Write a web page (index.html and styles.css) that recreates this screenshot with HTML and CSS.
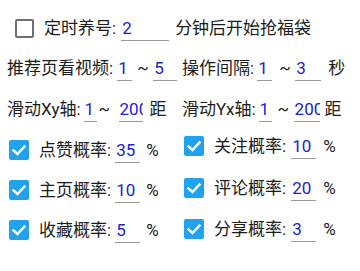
FILE: index.html
```html
<!DOCTYPE html>
<html>
<head>
<meta charset="utf-8">
<link rel="stylesheet" href="styles.css">
</head>
<body>
<div class="page">
  <div class="row r1">
    <span class="cb empty"></span>
    <span class="lbl l-first">定时养号:</span>
    <span class="inp w48 ml5">2</span>
    <span class="txt ml6">分钟后开始抢福袋</span>
  </div>

  <div class="pair r2">
    <div class="row">
      <span class="lbl">推荐页看视频:</span>
      <span class="inp w15 ml4">1</span>
      <span class="tilde t-a">~</span>
      <span class="inp w24">5</span>
    </div>
    <div class="row">
      <span class="lbl">操作间隔:</span>
      <span class="inp w15 ml3">1</span>
      <span class="tilde t-b">~</span>
      <span class="inp w26">3</span>
      <span class="txt ml7">秒</span>
    </div>
  </div>

  <div class="pair r3">
    <div class="row">
      <span class="lbl">滑动Xy轴:</span>
      <span class="inp w13 ml3">1</span>
      <span class="tilde t-c">~</span>
      <span class="inp w24 clip">200</span>
      <span class="txt ml7">距</span>
    </div>
    <div class="row">
      <span class="lbl">滑动Yx轴:</span>
      <span class="inp w13 ml3">1</span>
      <span class="tilde t-d">~</span>
      <span class="inp w26 clip">200</span>
      <span class="txt ml5">距</span>
    </div>
  </div>

  <div class="checks">
    <div class="col col-left">
      <div class="row">
        <span class="cb on"><svg viewBox="0 0 20 20"><polyline points="4.5,10.5 8.5,14 15.5,6.5"/></svg></span>
        <span class="lbl ml10">点赞概率:</span>
        <span class="inp w25 ml4">35</span>
        <span class="txt ml6">%</span>
      </div>
      <div class="row">
        <span class="cb on"><svg viewBox="0 0 20 20"><polyline points="4.5,10.5 8.5,14 15.5,6.5"/></svg></span>
        <span class="lbl ml10">主页概率:</span>
        <span class="inp w25 ml4">10</span>
        <span class="txt ml6">%</span>
      </div>
      <div class="row">
        <span class="cb on"><svg viewBox="0 0 20 20"><polyline points="4.5,10.5 8.5,14 15.5,6.5"/></svg></span>
        <span class="lbl ml10">收藏概率:</span>
        <span class="inp w25 ml4">5</span>
        <span class="txt ml6">%</span>
      </div>
    </div>
    <div class="col col-right">
      <div class="row">
        <span class="cb on"><svg viewBox="0 0 20 20"><polyline points="4.5,10.5 8.5,14 15.5,6.5"/></svg></span>
        <span class="lbl ml10">关注概率:</span>
        <span class="inp w25 ml5">10</span>
        <span class="txt ml7">%</span>
      </div>
      <div class="row">
        <span class="cb on"><svg viewBox="0 0 20 20"><polyline points="4.5,10.5 8.5,14 15.5,6.5"/></svg></span>
        <span class="lbl ml10">评论概率:</span>
        <span class="inp w25 ml5">20</span>
        <span class="txt ml7">%</span>
      </div>
      <div class="row">
        <span class="cb on"><svg viewBox="0 0 20 20"><polyline points="4.5,10.5 8.5,14 15.5,6.5"/></svg></span>
        <span class="lbl ml10">分享概率:</span>
        <span class="inp w25 ml5">3</span>
        <span class="txt ml7">%</span>
      </div>
    </div>
  </div>
</div>
</body>
</html>
```

FILE: styles.css
```css
html, body {
  margin: 0;
  padding: 0;
  background: #ffffff;
}
body {
  width: 360px;
  height: 271px;
  overflow: hidden;
  font-family: Roboto, "Noto Sans CJK SC", sans-serif;
  font-size: 17px;
  color: #1c1c1c;
}
.page {
  padding: 14px 0 0 7px;
  display: flex;
  flex-direction: column;
}
.row {
  display: flex;
  align-items: flex-start;
  height: 28px;
  white-space: nowrap;
}
.lbl, .txt, .tilde {
  line-height: 28px;
  height: 28px;
}
.inp {
  box-sizing: border-box;
  height: 27px;
  line-height: 28px;
  padding-left: 1px;
  color: #2020d4;
  border-bottom: 1.5px solid #9a9a9a;
  overflow: hidden;
}
.clip { overflow: hidden; }
.tilde {
  display: inline-block;
  width: 10px;
  text-align: center;
}
.t-a { margin-left: 5px; margin-right: 6px; }
.t-b { margin-left: 7px; margin-right: 6px; }
.t-c { margin-left: 2px; margin-right: 10px; }
.t-d { margin-left: 6px; margin-right: 6px; }

.w13 { width: 13px; }
.w15 { width: 15px; }
.w24 { width: 24px; }
.w25 { width: 25px; }
.w26 { width: 26px; }
.w48 { width: 48px; }
.ml3 { margin-left: 3px; }
.ml4 { margin-left: 4px; }
.ml5 { margin-left: 5px; }
.ml6 { margin-left: 6px; }
.ml7 { margin-left: 7px; }
.ml10 { margin-left: 10px; }

.cb {
  box-sizing: border-box;
  flex: none;
  width: 20px;
  height: 20px;
  margin-top: 4px;
  border-radius: 2px;
}
.cb.empty {
  width: 19px;
  height: 19px;
  margin-top: 5px;
  margin-left: 8px;
  border: 2px solid #6f6f6f;
}
.l-first { margin-left: 10px; }
.cb.on {
  margin-left: 2px;
  background: #1fa3ee;
}
.cb svg {
  display: block;
  width: 20px;
  height: 20px;
}
.cb polyline {
  fill: none;
  stroke: #ffffff;
  stroke-width: 2.4;
  stroke-linecap: square;
}

.pair {
  display: grid;
  grid-template-columns: 175px 175px;
}
.r2 { margin-top: 12px; }
.r3 { margin-top: 13px; }

.checks {
  display: grid;
  grid-template-columns: 175px 175px;
  margin-top: 9px;
}
.col {
  display: flex;
  flex-direction: column;
}
.col-left {
  padding-top: 4px;
  gap: 12px;
}
.col-right {
  gap: 13.5px;
}
```
